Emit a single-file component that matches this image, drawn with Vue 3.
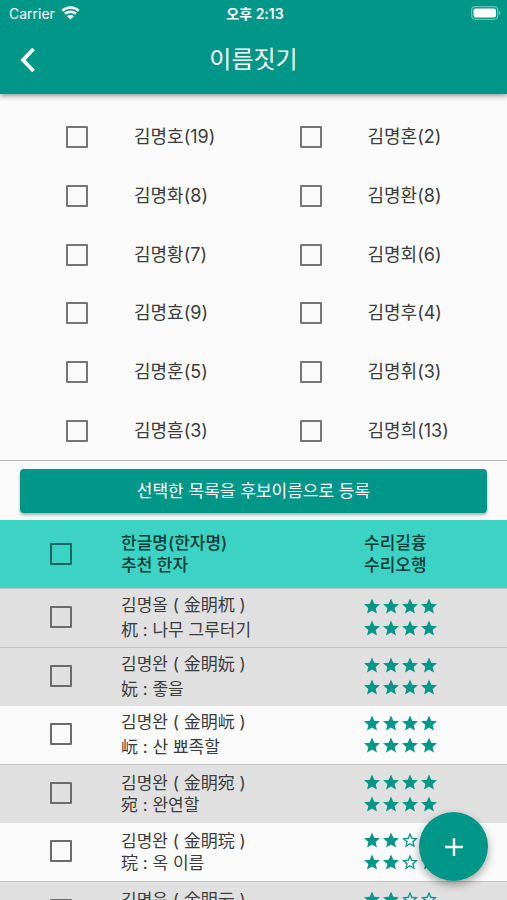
<script setup>
import { ref } from 'vue'

const names = ref([
  '김명호(19)', '김명혼(2)', '김명화(8)', '김명환(8)', '김명황(7)', '김명회(6)',
  '김명효(9)', '김명후(4)', '김명훈(5)', '김명휘(3)', '김명흠(3)', '김명희(13)',
].map((label) => ({ label, checked: false })))

// Each score is a list of four marks: 1 is a filled star, 0 an empty one.
const candidates = ref([
  { name: '김명올 ( 金眀杌 )', hanja: '杌 : 나무 그루터기', luck: [1, 1, 1, 1], element: [1, 1, 1, 1], shaded: true, tall: true },
  { name: '김명완 ( 金眀妧 )', hanja: '妧 : 좋을', luck: [1, 1, 1, 1], element: [1, 1, 1, 1], shaded: true, tall: true },
  { name: '김명완 ( 金眀岏 )', hanja: '岏 : 산 뾰족할', luck: [1, 1, 1, 1], element: [1, 1, 1, 1], shaded: false, tall: true },
  { name: '김명완 ( 金眀宛 )', hanja: '宛 : 완연할', luck: [1, 1, 1, 1], element: [1, 1, 1, 1], shaded: true, tall: false },
  { name: '김명완 ( 金眀琓 )', hanja: '琓 : 옥 이름', luck: [1, 1, 0, 0], element: [1, 1, 0, 1], shaded: false, tall: false },
  { name: '김명운 ( 金眀云 )', hanja: '云 : 이를', luck: [1, 1, 0, 0], element: [1, 1, 0, 0], shaded: true, tall: false },
].map((c) => ({ ...c, checked: false })))

const all = ref(false)
const toggleAll = () => candidates.value.forEach((c) => { c.checked = all.value })
const full = 'M12 17.27 18.18 21l-1.64-7.03L22 9.24l-7.19-.61L12 2 9.19 8.63 2 9.24l5.46 4.73L5.82 21z'
const outline = 'M22 9.24l-7.19-.62L12 2 9.19 8.63 2 9.24l5.46 4.73L5.82 21 12 17.27 18.18 21l-1.63-7.03L22 9.24zM12 15.4l-3.76 2.27 1-4.28-3.32-2.88 4.38-.38L12 6.1l1.71 4.04 4.38.38-3.32 2.88 1 4.28L12 15.4z'
</script>

<template>
  <div class="screen">
    <header class="top">
      <div class="status">
        <span class="carrier">Carrier
          <svg class="wifi" viewBox="0 0 19 14" aria-hidden="true">
            <path d="M1.2 4.7C6 .4 13 .4 17.8 4.7M4 7.8c3.2-2.8 7.8-2.8 11 0" fill="none" stroke="#fff" stroke-width="2.6" />
            <path d="M9.500 13.500 6 10.300c2-1.900 5-1.900 7 0z" fill="#fff" />
          </svg>
        </span>
        <span class="time">오후 2:13</span>
        <svg class="battery" viewBox="0 0 30 14" aria-hidden="true">
          <rect x=".7" y=".7" width="26" height="12.600" rx="3.500" fill="none" stroke="#fff" stroke-opacity=".4" stroke-width="1.200" />
          <rect x="2.500" y="2.500" width="22.500" height="9" rx="2" fill="#fff" />
          <path d="M28 4.600c2 1 2 3.800 0 4.800z" fill="#fff" fill-opacity=".4" />
        </svg>
      </div>
      <div class="bar">
        <button class="back" aria-label="뒤로">
          <svg viewBox="0 0 16 26" aria-hidden="true"><path d="M13.500 2 3 13l10.500 11" fill="none" stroke="#fff" stroke-width="3.800" /></svg>
        </button>
        <h1>이름짓기</h1>
      </div>
    </header>

    <section class="names">
      <label v-for="n in names" :key="n.label" class="name">
        <input v-model="n.checked" type="checkbox" class="box" />
        <span>{{ n.label }}</span>
      </label>
    </section>

    <div class="action">
      <button class="register">선택한 목록을 후보이름으로 등록</button>
    </div>

    <div class="results">
      <table>
        <thead>
          <tr>
            <th class="pick"><input v-model="all" type="checkbox" class="box" aria-label="전체 선택" @change="toggleAll" /></th>
            <th class="info">한글명(한자명)<br />추천 한자</th>
            <th class="score">수리길흉<br />수리오행</th>
          </tr>
        </thead>
        <tbody>
          <tr v-for="(c, i) in candidates" :key="i" :class="{ shaded: c.shaded, tall: c.tall }">
            <td class="pick"><input :id="'c' + i" v-model="c.checked" type="checkbox" class="box" /></td>
            <td class="info"><label :for="'c' + i">{{ c.name }}<br />{{ c.hanja }}</label></td>
            <td class="score">
              <div v-for="(marks, k) in [c.luck, c.element]" :key="k" class="stars">
                <svg v-for="(mark, s) in marks" :key="s" viewBox="2 2 20 19" aria-hidden="true"><path :d="mark ? full : outline" /></svg>
              </div>
            </td>
          </tr>
        </tbody>
      </table>
    </div>

    <button class="add" aria-label="추가">
      <svg viewBox="0 0 18 18" aria-hidden="true"><path d="M9 0v18M0 9h18" stroke="#fff" stroke-width="2.400" /></svg>
    </button>
  </div>
</template>

<style>
body {
  background: #fafafa;
}
</style>

<style scoped>
.screen {
  position: relative;
  display: flex;
  flex-direction: column;
  height: 100vh;
  overflow: hidden;
  background: #fafafa;
  color: #3c3c3c;
  font-family: Inter, "Noto Sans CJK KR", sans-serif;
  font-size: 17px;
}
button {
  border: 0;
  padding: 0;
  color: #fff;
  background: #009688;
  font: inherit;
  cursor: pointer;
}
svg {
  display: block;
}
.top {
  flex: none;
  color: #fff;
  background: #009688;
  box-shadow: 0 2px 5px rgba(0, 0, 0, 0.4);
}
.status {
  display: grid;
  grid-template-columns: 1fr auto 1fr;
  align-items: center;
  height: 26px;
  padding: 0 6px 0 9px;
  font-size: 14px;
}
.carrier {
  display: flex;
  align-items: center;
  gap: 6px;
}
.wifi {
  width: 19px;
  height: 14px;
}
.time {
  font-weight: 600;
}
.battery {
  justify-self: end;
  width: 30px;
  height: 14px;
}
.bar {
  display: grid;
  grid-template-columns: 56px 1fr 56px;
  align-items: center;
  height: 68px;
}
.back {
  display: flex;
  align-items: center;
  height: 56px;
  padding-left: 20px;
}
.back svg {
  width: 16px;
  height: 26px;
}
h1 {
  margin: 0;
  text-align: center;
  font-size: 24px;
  font-weight: 400;
  line-height: 32px;
}
.names {
  flex: none;
  display: grid;
  grid-template-columns: 1fr 1fr;
  grid-template-rows: repeat(6, 1fr);
  height: 352px;
  padding: 14px 20px 0;
  border-bottom: 1px solid #b5b5b5;
  font-size: 18px;
}
.name {
  display: flex;
  align-items: center;
  gap: 46px;
  padding-left: 46px;
}
.name span {
  padding-bottom: 4px;
}
.box {
  appearance: none;
  flex: none;
  display: block;
  box-sizing: border-box;
  width: 22px;
  height: 22px;
  margin: 0;
  border: 2px solid #757575;
  border-radius: 1px;
}
.box:checked {
  background: #009688;
}
.action {
  flex: none;
  padding: 8px 20px 7px;
}
.register {
  display: block;
  width: 100%;
  height: 44px;
  padding-bottom: 4px;
  border-radius: 4px;
  box-shadow: 0 2px 3px rgba(0, 0, 0, 0.3);
}
.results {
  flex: 1;
  min-height: 0;
  overflow: hidden;
}
table {
  width: 100%;
  table-layout: fixed;
  border-spacing: 0;
}
th,
td {
  box-sizing: border-box;
  padding: 0;
  text-align: left;
  line-height: 22px;
}
th {
  height: 68px;
  background: #3dd3c4;
  color: #0e3b36;
  font-weight: 500;
}
td {
  height: 58px;
}
.shaded td {
  height: 59px;
  border-top: 1px solid #c4c4c4;
  background: #e0e0e0;
}
.tall .info {
  line-height: 25px;
}
.pick {
  width: 121px;
  padding-left: 50px;
}
th .box {
  border-color: #1c655e;
}
td .box {
  border-color: #6b6b6b;
}
.score {
  width: 143px;
}
td.pick,
td.score {
  padding-bottom: 2px;
}
.stars {
  display: flex;
  gap: 3px;
  height: 22px;
  align-items: center;
}
.stars svg {
  width: 16px;
  height: 16px;
  fill: #009688;
}
.add {
  position: absolute;
  right: 19px;
  bottom: 19px;
  display: grid;
  place-items: center;
  width: 69px;
  height: 69px;
  border-radius: 50%;
  box-shadow: 0 4px 8px rgba(0, 0, 0, 0.35);
}
.add svg {
  width: 18px;
  height: 18px;
}
</style>
